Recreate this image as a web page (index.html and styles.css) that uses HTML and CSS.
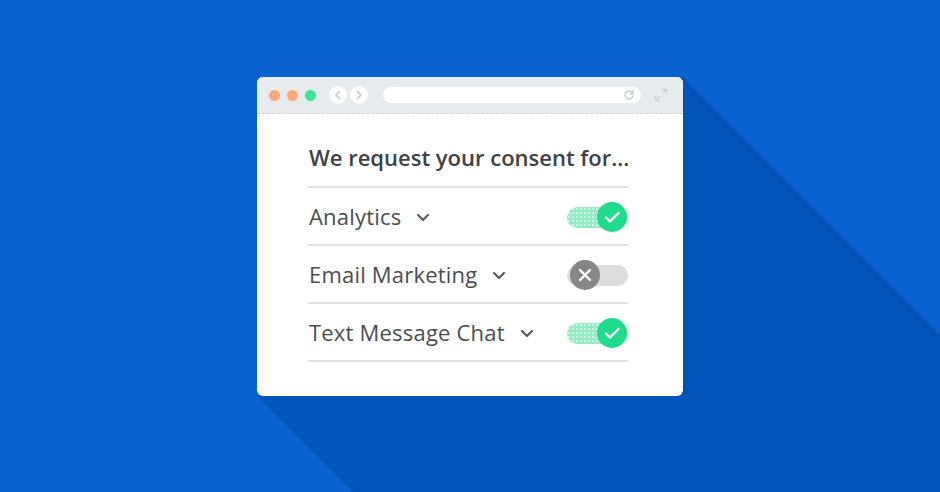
FILE: index.html
```html
<!DOCTYPE html>
<html lang="en">
<head>
    <meta charset="UTF-8">
    <title>Consent</title>
    <link rel="stylesheet" href="styles.css">
</head>
<body>
    <svg class="long-shadow" width="940" height="492" viewBox="0 0 940 492">
        <polygon points="683,77 940,334 940,492 353,492 257,396" fill="#0254b8"/>
    </svg>

    <div class="stage">
        <div class="window">
            <div class="window-bar">
                <span class="dot orange"></span>
                <span class="dot orange"></span>
                <span class="dot green"></span>

                <div class="nav">
                    <span class="nav-btn">
                        <svg width="18" height="18" viewBox="0 0 18 18"><path d="M10.5 5.5 7 9l3.5 3.5" fill="none" stroke="#c4c7ca" stroke-width="1.6" stroke-linecap="round" stroke-linejoin="round"/></svg>
                    </span>
                    <span class="nav-btn">
                        <svg width="18" height="18" viewBox="0 0 18 18"><path d="M7.5 5.5 11 9l-3.5 3.5" fill="none" stroke="#c4c7ca" stroke-width="1.6" stroke-linecap="round" stroke-linejoin="round"/></svg>
                    </span>
                </div>

                <div class="url">
                    <svg width="12" height="12" viewBox="0 0 12 12"><path d="M9.6 4.2A4 4 0 1 0 10 6.6" fill="none" stroke="#c6c9cc" stroke-width="1.4" stroke-linecap="round"/><path d="M10 1.8v2.8H7.2" fill="none" stroke="#c6c9cc" stroke-width="1.4" stroke-linecap="round" stroke-linejoin="round"/></svg>
                </div>

                <svg class="expand" width="14" height="14" viewBox="0 0 14 14">
                    <path d="M8.5 1.5h4v4M12.5 1.5 8.5 5.5M5.5 12.5h-4v-4M1.5 12.5l4-4" fill="none" stroke="#cfd3d6" stroke-width="1.3" stroke-linecap="round" stroke-linejoin="round"/>
                </svg>
            </div>

            <div class="content">
                <h1>We request your consent for...</h1>

                <div class="row">
                    <span class="label">Analytics</span>
                    <svg class="chev" width="14" height="9" viewBox="0 0 14 9"><path d="M2 2l5 5 5-5" fill="none" stroke="#53565a" stroke-width="2" stroke-linecap="round" stroke-linejoin="round"/></svg>
                    <div class="toggle on">
                        <span class="knob">
                            <svg width="30" height="30" viewBox="0 0 30 30"><path d="M9 15.5l4 4 8.5-8.5" fill="none" stroke="#fff" stroke-width="2.4" stroke-linecap="round" stroke-linejoin="round"/></svg>
                        </span>
                    </div>
                </div>

                <div class="row">
                    <span class="label">Email Marketing</span>
                    <svg class="chev" width="14" height="9" viewBox="0 0 14 9"><path d="M2 2l5 5 5-5" fill="none" stroke="#53565a" stroke-width="2" stroke-linecap="round" stroke-linejoin="round"/></svg>
                    <div class="toggle off">
                        <span class="knob">
                            <svg width="30" height="30" viewBox="0 0 30 30"><path d="M10 10l10 10M20 10 10 20" fill="none" stroke="#fff" stroke-width="2.4" stroke-linecap="round"/></svg>
                        </span>
                    </div>
                </div>

                <div class="row">
                    <span class="label">Text Message Chat</span>
                    <svg class="chev" width="14" height="9" viewBox="0 0 14 9"><path d="M2 2l5 5 5-5" fill="none" stroke="#53565a" stroke-width="2" stroke-linecap="round" stroke-linejoin="round"/></svg>
                    <div class="toggle on">
                        <span class="knob">
                            <svg width="30" height="30" viewBox="0 0 30 30"><path d="M9 15.5l4 4 8.5-8.5" fill="none" stroke="#fff" stroke-width="2.4" stroke-linecap="round" stroke-linejoin="round"/></svg>
                        </span>
                    </div>
                </div>
            </div>
        </div>
    </div>
</body>
</html>
```

FILE: styles.css
```css
html, body {
    margin: 0;
    padding: 0;
}
body {
    width: 940px;
    height: 492px;
    overflow: hidden;
    background: #0a62d0;
    font-family: "Open Sans", Lato, sans-serif;
    position: relative;
}
.long-shadow {
    position: absolute;
    top: 0;
    left: 0;
    display: block;
}
.stage {
    position: relative;
    display: flex;
    justify-content: center;
    padding-top: 77px;
}
.window {
    width: 426px;
    height: 319px;
    background: #fff;
    border-radius: 6px;
    overflow: hidden;
    display: flex;
    flex-direction: column;
}
.window-bar {
    height: 36px;
    background: #e7ebee;
    border-bottom: 1px dashed #cfd4d8;
    display: flex;
    align-items: center;
    padding: 0 15px 0 12px;
}
.dot {
    width: 11px;
    height: 11px;
    border-radius: 50%;
    margin-right: 7px;
}
.dot.orange {
    background: #fba67b;
}
.dot.green {
    background: #41e19a;
    margin-right: 0;
}
.nav {
    display: flex;
    gap: 3px;
    margin-left: 13px;
}
.nav-btn {
    width: 18px;
    height: 18px;
    border-radius: 50%;
    background: #fff;
    display: flex;
}
.url {
    flex: 1;
    height: 16px;
    margin-left: 15px;
    background: #fff;
    border-radius: 8px;
    display: flex;
    align-items: center;
    justify-content: flex-end;
    padding-right: 6px;
}
.expand {
    margin-left: 13px;
}
.content {
    padding: 28px 55px 0 51px;
}
h1 {
    margin: 0 0 14px 1px;
    font-size: 22px;
    line-height: 30px;
    font-weight: 600;
    color: #3f4245;
    white-space: nowrap;
}
.row {
    display: flex;
    align-items: center;
    height: 56px;
    border-top: 2px solid #dfe2e4;
}
.row:last-child {
    border-bottom: 2px solid #dfe2e4;
}
.label {
    margin-left: 1px;
    font-size: 22px;
    letter-spacing: 0.2px;
    color: #4b4e51;
}
.chev {
    margin-left: 15px;
    margin-top: 2px;
}
.toggle {
    margin-left: auto;
    margin-top: 3px;
    position: relative;
    width: 61px;
    height: 21px;
    border-radius: 11px;
}
.toggle.on {
    background-color: #95ebc5;
    background-image: radial-gradient(rgba(255,255,255,0.55) 0.7px, transparent 1.1px);
    background-size: 4px 4px;
}
.toggle.off {
    background: #dcdddd;
}
.knob {
    position: absolute;
    top: -5px;
    width: 30px;
    height: 30px;
    border-radius: 50%;
    display: flex;
}
.toggle.on .knob {
    right: 1px;
    background: #1fdb8b;
}
.toggle.off .knob {
    left: 3px;
    background: #868788;
}
```
